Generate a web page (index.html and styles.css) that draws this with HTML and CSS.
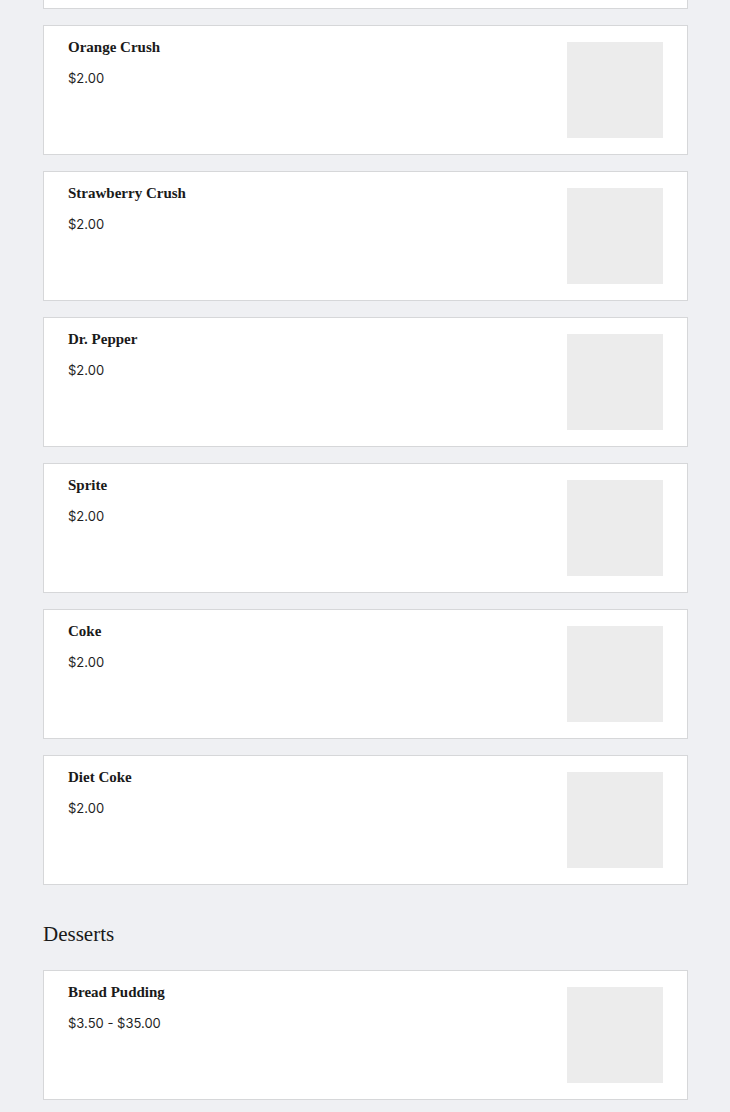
FILE: index.html
```html
<!DOCTYPE html>
<html>
<head>
<meta charset="utf-8">
<link rel="stylesheet" href="styles.css">
</head>
<body>
<main class="menu">
  <section class="section">
    <div class="card-tail"></div>
    <div class="card">
      <div class="info"><h3 class="name">Orange Crush</h3><p class="price">$2.00</p></div>
      <div class="thumb"></div>
    </div>
    <div class="card">
      <div class="info"><h3 class="name">Strawberry Crush</h3><p class="price">$2.00</p></div>
      <div class="thumb"></div>
    </div>
    <div class="card">
      <div class="info"><h3 class="name">Dr. Pepper</h3><p class="price">$2.00</p></div>
      <div class="thumb"></div>
    </div>
    <div class="card">
      <div class="info"><h3 class="name">Sprite</h3><p class="price">$2.00</p></div>
      <div class="thumb"></div>
    </div>
    <div class="card">
      <div class="info"><h3 class="name">Coke</h3><p class="price">$2.00</p></div>
      <div class="thumb"></div>
    </div>
    <div class="card">
      <div class="info"><h3 class="name">Diet Coke</h3><p class="price">$2.00</p></div>
      <div class="thumb"></div>
    </div>
  </section>
  <section class="section">
    <h2 class="section-title">Desserts</h2>
    <div class="card">
      <div class="info"><h3 class="name">Bread Pudding</h3><p class="price">$3.50 - $35.00</p></div>
      <div class="thumb"></div>
    </div>
  </section>
</main>
</body>
</html>
```

FILE: styles.css
```css
html, body {
  margin: 0;
  padding: 0;
  background: #eff0f3;
}
.menu {
  padding: 0 42px 0 43px;
  display: flex;
  flex-direction: column;
}
.section {
  display: flex;
  flex-direction: column;
  gap: 16px;
}
.card-tail {
  box-sizing: border-box;
  height: 9px;
  background: #fff;
  border: 1px solid #d6d7d9;
  border-top: none;
}
.card {
  box-sizing: border-box;
  height: 130px;
  background: #fff;
  border: 1px solid #d6d7d9;
  padding: 16px 24px;
  display: flex;
  justify-content: space-between;
  align-items: flex-start;
}
.info {
  display: flex;
  flex-direction: column;
}
.name {
  margin: 0;
  font-family: "Liberation Serif", "DejaVu Serif", serif;
  font-weight: bold;
  font-size: 15px;
  line-height: 20px;
  color: #1a1a1a;
  margin-top: -5px;
}
.price {
  margin: 12px 0 0 0;
  font-family: "Inter", "Liberation Sans", sans-serif;
  font-size: 13px;
  line-height: 18px;
  color: #1f1f1f;
}
.thumb {
  width: 96px;
  height: 96px;
  background: #ececec;
  flex: none;
}
.section-title {
  margin: 35px 0 6px 0;
  font-family: "Liberation Serif", "DejaVu Serif", serif;
  font-weight: normal;
  font-size: 21px;
  line-height: 28px;
  color: #1a1a1a;
}
```
